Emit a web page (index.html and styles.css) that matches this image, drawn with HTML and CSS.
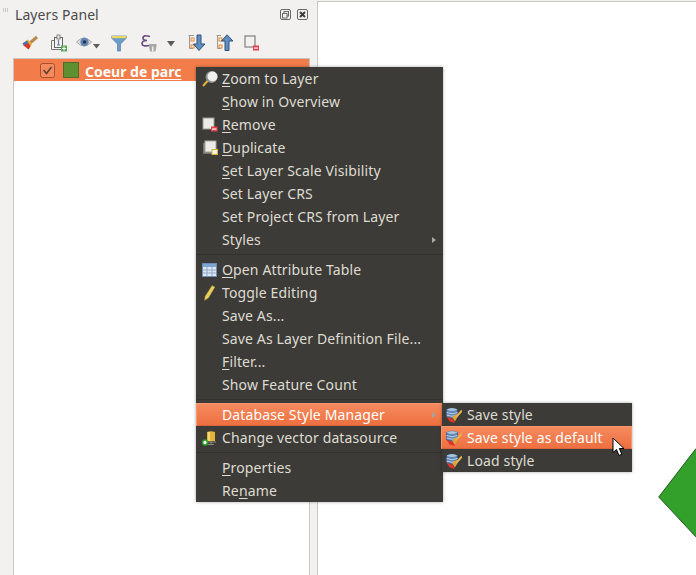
FILE: index.html
```html
<!DOCTYPE html>
<html lang="en">
<head>
<meta charset="utf-8">
<title>Layers Panel</title>
<link rel="stylesheet" href="styles.css">
</head>
<body>
<svg class="defs" width="0" height="0" aria-hidden="true">
  <defs>
    <symbol id="style-db" viewBox="0 0 16 16">
      <path d="M.5 2.500 Q6 -.5 11.500 2.500 V10 Q6 12.500 .5 10Z" fill="#5f86b4" stroke="#2f4f78" stroke-width=".7"/>
      <path d="M.5 2.500 Q6 5.500 11.500 2.500 Q6 -.5 .5 2.500Z" fill="#a9c3de"/>
      <path d="M.5 5.500 Q6 8 11.500 5.500 M.5 8 Q6 10.500 11.500 8" fill="none" stroke="#c6d6e8" stroke-width=".9"/>
      <path d="M.5 9.500 L7 12 L9 16 L3.500 14.500 Z" fill="#d9352b"/>
      <path d="M6 10 L9.500 7.500 L11.500 10 L9 14.500 Z" fill="#e0a23a"/>
      <path d="M10 10 L16 3.500" stroke="#e9b44c" stroke-width="2"/>
    </symbol>
  </defs>
</svg>
<div class="app">
  <section class="panel">
    <header class="panel-title">
      <span class="grip"></span>
      <h1 class="panel-name">Layers Panel</h1>
      <svg class="win-btn float" width="11" height="11" viewBox="0 0 11 11"><rect x=".5" y=".5" width="10" height="10" rx="1.500" fill="none" stroke="#6b6965"/><rect x="4" y="2.500" width="4.500" height="4.500" fill="none" stroke="#6b6965"/><rect x="2.500" y="4.500" width="4.500" height="4.500" fill="#f2f1f0" stroke="#6b6965"/></svg>
      <svg class="win-btn" width="11" height="11" viewBox="0 0 11 11"><rect x=".5" y=".5" width="10" height="10" rx="1.500" fill="none" stroke="#6b6965"/><path d="M3 3 L8 8 M8 3 L3 8" stroke="#3c3b37" stroke-width="1.900"/></svg>
    </header>
    <div class="toolbar">
      <svg width="16" height="16" viewBox="0 0 16 16"><path d="M.5 8.500 L6 4.500 L10 9 L7 14 Z" fill="#e8b23d"/><path d="M.5 8.500 L5 5.500 L6.500 8 L2 11 Z" fill="#4a6fb5"/><path d="M1.500 10.500 L6.500 8 L8.500 11 L6.500 14.500 Z" fill="#d8372c"/><path d="M8.500 7.500 L15 2" stroke="#b98a4b" stroke-width="3"/></svg>
      <svg width="16" height="18" viewBox="0 0 16 18"><path d="M.5 6.500 H3 M.5 6.500 V15.500 H10" fill="none" stroke="#777" /><rect x="3.500" y="3.500" width="8" height="10" fill="#f2f1f0" stroke="#666"/><rect x="6" y="1" width="3" height="4" fill="#f2f1f0" stroke="#666" stroke-width=".8"/><path d="M7.500 6 V11 M6 11 H9" stroke="#5d7fa8" stroke-width="1.200"/><rect x="10" y="11.500" width="6" height="6" fill="#5aa95a"/><path d="M13 12.500 V16.500 M11 14.500 H15" stroke="#fff"/></svg>
      <svg width="24" height="16" viewBox="0 0 24 16"><path d="M.5 7 Q8 -1 15.500 7 Q8 15 .5 7Z" fill="#e0dfdc" stroke="#a9a8a5"/><circle cx="8.500" cy="7" r="4.200" fill="#5f86b4"/><circle cx="8.500" cy="7" r="1.800" fill="#26384f"/><path d="M17 9 H24 L20.500 13.500Z" fill="#5e5c58"/></svg>
      <svg width="16" height="17" viewBox="0 0 16 17"><path d="M.5 1 H15.500 V3 L9.500 9 V16 H6.500 V9 L.5 3Z" fill="#6a9bc9" stroke="#4f7fae" stroke-width=".7"/><rect x=".5" y="1" width="15" height="2.200" fill="#ecd562"/></svg>
      <svg width="17" height="18" viewBox="0 0 17 18"><path d="M10 2.500 Q3 .5 3 4 Q3 6.500 7 6.500 Q2 6.500 2 9.500 Q2 13 10 11.500" fill="none" stroke="#6d4c80" stroke-width="1.700"/><path d="M9 10 H16.500 V12 L15.500 17.500 H10 L9 12Z" fill="#a9a8a4"/><path d="M12.700 12.500 V17.500" stroke="#f2f1f0" stroke-width="1.400"/></svg>
      <svg class="tool-drop" width="8" height="6" viewBox="0 0 8 6"><path d="M0 0 H8 L4 5.500Z" fill="#5e5c58"/></svg>
      <svg width="18" height="18" viewBox="0 0 18 18"><path d="M.5 1.500 H6 M1.500 1.500 V14.500 H5" fill="none" stroke="#999"/><rect x="3" y="4" width="3" height="3" fill="#f2f1f0" stroke="#ef8a2c"/><rect x="3" y="11" width="3" height="3" fill="#f2f1f0" stroke="#ef8a2c"/><path d="M9 1 H13 V10 H17 L11 16.500 L5.500 10 H9Z" fill="#5f8fc0" stroke="#2e527d"/></svg>
      <svg width="18" height="18" viewBox="0 0 18 18"><path d="M.5 1.500 H5 M1.500 1.500 V14.500 H5" fill="none" stroke="#999"/><rect x="3" y="4" width="3" height="3" fill="#f2f1f0" stroke="#ef8a2c"/><rect x="3" y="11" width="3" height="3" fill="#f2f1f0" stroke="#ef8a2c"/><path d="M9 16.500 H13 V7 H17 L11 .8 L5.500 7 H9Z" fill="#5f8fc0" stroke="#2e527d"/></svg>
      <svg width="15" height="17" viewBox="0 0 15 17"><rect x="1" y="1" width="10" height="11" fill="#f2f1f0" stroke="#8a8986" stroke-width="1.300"/><rect x="9" y="10.500" width="6" height="5" fill="#e6404a"/><rect x="10" y="12.500" width="4" height="1.200" fill="#fff"/></svg>
    </div>
    <div class="tree">
      <div class="layer-row">
        <span class="layer-check"><svg width="15" height="15" viewBox="0 0 15 15"><rect x=".5" y=".5" width="14" height="14" rx="2" fill="#f58a5e" stroke="#a9502a"/><path d="M3.500 7 L6.500 10.500 L11.500 4" fill="none" stroke="#5b4033" stroke-width="1.500"/></svg></span>
        <span class="layer-swatch"></span>
        <span class="layer-name">Coeur de parc</span>
      </div>
    </div>
  </section>
  <main class="canvas">
    <svg class="feature" width="38" height="90" viewBox="0 0 38 90"><path d="M38 0.500 L.7 49 L38 89" fill="#33a02c" stroke="#123d10" stroke-width=".8"/></svg>
  </main>
</div>

<nav class="menu main-menu">
  <div class="item"><span class="ico"><svg width="16" height="16" viewBox="0 0 16 16"><circle cx="9.500" cy="6" r="6" fill="#8e8e8a"/><circle cx="10.500" cy="5.500" r="5" fill="#f0f0ee"/><path d="M5.500 10 L1 15" stroke="#e3b23c" stroke-width="2"/></svg></span><span class="lbl"><u>Z</u>oom to Layer</span></div>
  <div class="item"><span class="ico"></span><span class="lbl"><u>S</u>how in Overview</span></div>
  <div class="item"><span class="ico"><svg width="16" height="16" viewBox="0 0 16 16"><rect x="1" y="1" width="11" height="11" fill="#ecebe8" stroke="#9a9a96"/><rect x="9" y="9.500" width="6.500" height="5" fill="#e6404a"/><rect x="10" y="11.500" width="4.500" height="1.200" fill="#fff"/></svg></span><span class="lbl"><u>R</u>emove</span></div>
  <div class="item"><span class="ico"><svg width="16" height="16" viewBox="0 0 16 16"><rect x="1" y="3" width="11" height="11" fill="#77766f"/><rect x="3" y="1" width="11" height="11" fill="#ecebe8" stroke="#a5a5a0"/><rect x="10" y="9.500" width="5.500" height="5" fill="#f2f1f0" stroke="#d6b530"/></svg></span><span class="lbl"><u>D</u>uplicate</span></div>
  <div class="item"><span class="ico"></span><span class="lbl"><u>S</u>et Layer Scale Visibility</span></div>
  <div class="item"><span class="ico"></span><span class="lbl">Set Layer CRS</span></div>
  <div class="item"><span class="ico"></span><span class="lbl">Set Project CRS from Layer</span></div>
  <div class="item"><span class="ico"></span><span class="lbl">Styles</span><span class="more"></span></div>
  <div class="sep"></div>
  <div class="item"><span class="ico"><svg width="16" height="16" viewBox="0 0 16 16"><rect x=".5" y="1.500" width="14" height="13" fill="#dfe8f2" stroke="#6c8fb8"/><rect x="1" y="2" width="13" height="3" fill="#7fa6d2"/><path d="M1 8 H14 M1 11 H14 M5 5 V14 M10 5 V14" stroke="#8fa9c8"/></svg></span><span class="lbl"><u>O</u>pen Attribute Table</span></div>
  <div class="item"><span class="ico"><svg width="16" height="16" viewBox="0 0 16 16"><path d="M10 .5 L13 2 L6.500 13 L2.500 15.500 L3 11.500Z" fill="#e9cf5e" stroke="#8a7a34" stroke-width=".5"/></svg></span><span class="lbl">Toggle Editing</span></div>
  <div class="item"><span class="ico"></span><span class="lbl">Save As...</span></div>
  <div class="item"><span class="ico"></span><span class="lbl">Save As Layer Definition File...</span></div>
  <div class="item"><span class="ico"></span><span class="lbl"><u>F</u>ilter...</span></div>
  <div class="item"><span class="ico"></span><span class="lbl">Show Feature Count</span></div>
  <div class="sep"></div>
  <div class="item active"><span class="ico"></span><span class="lbl">Database Style Manager</span><span class="more"></span></div>
  <div class="item"><span class="ico"><svg width="16" height="16" viewBox="0 0 16 16"><path d="M5 2 Q9 .5 13 2 V11 H5Z" fill="#e3b53a"/><rect x="6" y="2" width="2" height="9" fill="#f4d873"/><path d="M0 12 H14 M9 11 V14 M6 14.500 H12" stroke="#8b8b80"/><circle cx="3" cy="12.500" r="2.500" fill="#fff" stroke="#2f9b2f" stroke-width="1.700"/></svg></span><span class="lbl">Change vector datasource</span></div>
  <div class="sep"></div>
  <div class="item"><span class="ico"></span><span class="lbl"><u>P</u>roperties</span></div>
  <div class="item"><span class="ico"></span><span class="lbl">Re<u>n</u>ame</span></div>
</nav>

<nav class="menu sub-menu">
  <div class="item"><span class="ico"><svg width="16" height="16"><use href="#style-db"/></svg></span><span class="lbl">Save style</span></div>
  <div class="item active"><span class="ico"><svg width="16" height="16"><use href="#style-db"/></svg></span><span class="lbl">Save style as default</span></div>
  <div class="item"><span class="ico"><svg width="16" height="16"><use href="#style-db"/></svg></span><span class="lbl">Load style</span></div>
</nav>

<svg class="cursor" width="14" height="20" viewBox="0 0 14 20"><path d="M1 1 V15.500 L4.500 12.500 L7 18.500 L9.800 17.300 L7.300 11.500 H12Z" fill="#fff" stroke="#000" stroke-width="1"/></svg>
</body>
</html>
```
FILE: styles.css
```css
* { box-sizing: border-box; }
html, body { margin: 0; height: 575px; overflow: hidden; }
body {
  background: #f2f1f0;
  font-family: "Noto Sans", "Open Sans", sans-serif;
  font-size: 14px;
  position: relative;
}
.defs { position: absolute; }
.app { display: flex; height: 575px; }

.panel { width: 317px; flex: none; display: flex; flex-direction: column; }
.panel-title { display: flex; align-items: center; height: 28px; padding: 0 6px 0 3px; }
.grip {
  width: 6px; height: 4px; margin-top: -9px; margin-right: 6px;
  background: repeating-linear-gradient(90deg, #c9c7c3 0 1px, transparent 1px 2px);
}
.panel-name { margin: 0; flex: 1; font: inherit; font-size: 14px; color: #4c4c4c; letter-spacing: .08px; }
.win-btn { flex: none; margin-left: 5px; margin-right: 3px; }
.win-btn.float { margin-right: 1px; }

.toolbar {
  display: grid;
  grid-template-columns: 29px 25px 35px 29px 27px 21px 28px 28px 16px;
  align-items: center;
  height: 30px;
  padding-left: 22px;
}
.tool-drop { margin-top: 2px; }

.tree {
  flex: 1;
  margin: 0 7px 0 13px;
  background: #fff;
  border: 1px solid #c8c6c2;
  border-width: 1px 1px 0 1px;
}
.layer-row {
  display: flex; align-items: center;
  height: 22px;
  background: #f27c4a;
  padding-left: 26px;
}
.layer-check { display: flex; width: 23px; }
.layer-swatch { width: 16px; height: 16px; background: #5e8f30; border: 1px solid #4d6b2c; margin-right: 6px; }
.layer-name {
  color: #fff; font-weight: 700; font-size: 14px;
  position: relative; top: 1px;
  text-decoration: underline; text-underline-offset: 2px;
}

.canvas {
  flex: 1; position: relative; overflow: hidden;
  background: #fff;
  margin-top: 1px;
  border-left: 1px solid #c8c6c2;
  border-top: 1px solid #c8c6c2;
}
.feature { position: absolute; right: 0; top: 446px; }

.menu {
  position: absolute;
  background: #3c3b37;
  color: #dfdbd2;
  box-shadow: 0 0 3px rgba(0, 0, 0, .35);
}
.main-menu { left: 196px; top: 67px; width: 247px; }
.sub-menu { left: 442px; top: 403px; width: 190px; }
.item {
  display: flex; align-items: center;
  height: 23px;
  padding: 0 7px 0 6px;
  white-space: nowrap;
}
.sub-menu .item { padding-left: 4px; }
.ico { width: 16px; height: 16px; flex: none; display: flex; margin-right: 4px; }
.sub-menu .ico { margin-right: 5px; }
.lbl { flex: 1; letter-spacing: .13px; }
u { text-underline-offset: 2px; }
.more {
  width: 0; height: 0;
  border-left: 4px solid #a8a59e;
  border-top: 3px solid transparent;
  border-bottom: 3px solid transparent;
}
.item.active {
  background: linear-gradient(#f58a5e, #ee7040);
  border: 1px solid #f7996f;
  border-bottom-color: #d9633a;
  color: #fff;
}
.main-menu .item.active { padding-left: 5px; padding-right: 6px; }
.sub-menu .item.active { margin-left: -1px; padding-left: 4px; }
.sep { height: 7px; display: flex; align-items: center; }
.sep::before { content: ""; flex: 1; height: 1px; background: #33322e; }

.cursor { position: absolute; left: 612px; top: 437px; }
```
